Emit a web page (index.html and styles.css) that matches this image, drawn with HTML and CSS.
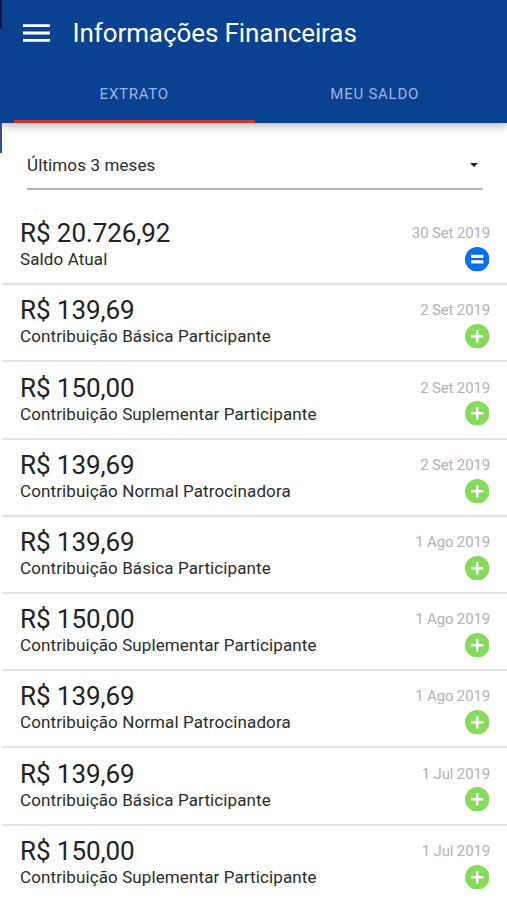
FILE: index.html
```html
<!DOCTYPE html>
<html lang="pt-BR">
<head>
<meta charset="utf-8">
<title>Informações Financeiras</title>
<link rel="stylesheet" href="styles.css">
</head>
<body>
<svg class="symbols" aria-hidden="true">
  <symbol id="plus" viewBox="0 0 24 24"><circle cx="12" cy="12" r="12" fill="#85dc5a"/><path d="M12 6v12M6 12h12" stroke="#fff" stroke-width="2.5"/></symbol>
  <symbol id="equal" viewBox="0 0 24 24"><circle cx="12" cy="12" r="12" fill="#0670f0"/><path d="M6 9.2h12M6 14.6h12" stroke="#fff" stroke-width="3"/></symbol>
</svg>
<div class="edge"></div>
<div class="screen">
  <header class="header">
    <div class="toolbar">
      <svg class="menu" viewBox="0 0 27 18"><path d="M0 1.6h27M0 9h27M0 16.4h27" stroke="#fff" stroke-width="2.8"/></svg>
      <h1 class="title">Informações Financeiras</h1>
    </div>
    <nav class="tabs">
      <div class="tab active"><span>EXTRATO</span></div>
      <div class="tab"><span>MEU SALDO</span></div>
    </nav>
  </header>
  <div class="select"><span>Últimos 3 meses</span><i class="caret"></i></div>
  <ul class="list">
    <li class="row"><div><p class="amount">R$ 20.726,92</p><p class="label">Saldo Atual</p></div><div class="side"><p class="date">30 Set 2019</p><svg class="icon"><use href="#equal"/></svg></div></li>
    <li class="row"><div><p class="amount">R$ 139,69</p><p class="label">Contribuição Básica Participante</p></div><div class="side"><p class="date">2 Set 2019</p><svg class="icon"><use href="#plus"/></svg></div></li>
    <li class="row"><div><p class="amount">R$ 150,00</p><p class="label">Contribuição Suplementar Participante</p></div><div class="side"><p class="date">2 Set 2019</p><svg class="icon"><use href="#plus"/></svg></div></li>
    <li class="row"><div><p class="amount">R$ 139,69</p><p class="label">Contribuição Normal Patrocinadora</p></div><div class="side"><p class="date">2 Set 2019</p><svg class="icon"><use href="#plus"/></svg></div></li>
    <li class="row"><div><p class="amount">R$ 139,69</p><p class="label">Contribuição Básica Participante</p></div><div class="side"><p class="date">1 Ago 2019</p><svg class="icon"><use href="#plus"/></svg></div></li>
    <li class="row"><div><p class="amount">R$ 150,00</p><p class="label">Contribuição Suplementar Participante</p></div><div class="side"><p class="date">1 Ago 2019</p><svg class="icon"><use href="#plus"/></svg></div></li>
    <li class="row"><div><p class="amount">R$ 139,69</p><p class="label">Contribuição Normal Patrocinadora</p></div><div class="side"><p class="date">1 Ago 2019</p><svg class="icon"><use href="#plus"/></svg></div></li>
    <li class="row"><div><p class="amount">R$ 139,69</p><p class="label">Contribuição Básica Participante</p></div><div class="side"><p class="date">1 Jul 2019</p><svg class="icon"><use href="#plus"/></svg></div></li>
    <li class="row"><div><p class="amount">R$ 150,00</p><p class="label">Contribuição Suplementar Participante</p></div><div class="side"><p class="date">1 Jul 2019</p><svg class="icon"><use href="#plus"/></svg></div></li>
  </ul>
</div>
</body>
</html>
```
FILE: styles.css
```css
* { box-sizing: border-box; margin: 0; padding: 0; }
html, body { height: 900px; overflow: hidden; }
body { display: flex; background: #fff; font-family: Roboto, sans-serif; color: #2b2b2b; }
.symbols { position: absolute; width: 0; height: 0; }
.edge { width: 2px; flex: none; background: linear-gradient(#03133b 0 29px, #0a4191 29px 123px, #3c45a0 123px 153px, #fff 153px); }
.screen { flex: 1; min-width: 0; }
.header { height: 123px; background: #0a4191; box-shadow: 0 2px 9px rgba(0, 0, 0, .35); clip-path: inset(0 0 -20px 0); }
.toolbar { display: flex; align-items: center; height: 65px; padding-left: 21px; }
.menu { width: 27px; height: 18px; margin-right: 22.5px; }
.title { color: #fff; font-size: 26px; font-weight: 400; line-height: 30px; letter-spacing: -.09px; white-space: nowrap; }
.tabs { display: flex; height: 58px; padding: 0 12px; }
.tab { flex: 1; display: flex; align-items: center; justify-content: center; padding-top: 2px; color: #9fb5e2; font-size: 15px; letter-spacing: .75px; border-bottom: 3px solid transparent; }
.active { border-color: #c4352f; }
.select { display: flex; align-items: center; justify-content: space-between; height: 50px; margin: 17px 24px 0 25px; padding: 1px 5px 0 0; border-bottom: 2px solid #b2b6b5; font-size: 17px; letter-spacing: .12px; }
.caret { border: 4px solid transparent; border-top-color: #222; border-bottom: 0; }
.list { list-style: none; padding-top: 18px; }
.row { display: flex; justify-content: space-between; height: 77.2px; padding: 10.2px 17px 0 18px; border-bottom: 2px solid #e4e4e4; }
.row:last-child { border-bottom: 0; }
.amount { font-size: 26px; line-height: 30px; letter-spacing: -.08px; color: #222; }
.label { font-size: 17px; line-height: 22px; letter-spacing: .11px; white-space: nowrap; }
.side { display: flex; flex-direction: column; align-items: flex-end; }
.date { font-size: 15px; line-height: 30px; letter-spacing: -.15px; color: #b3b3b3; }
.icon { width: 24.5px; height: 24.5px; margin: -1.1px .6px 0 0; }
```
